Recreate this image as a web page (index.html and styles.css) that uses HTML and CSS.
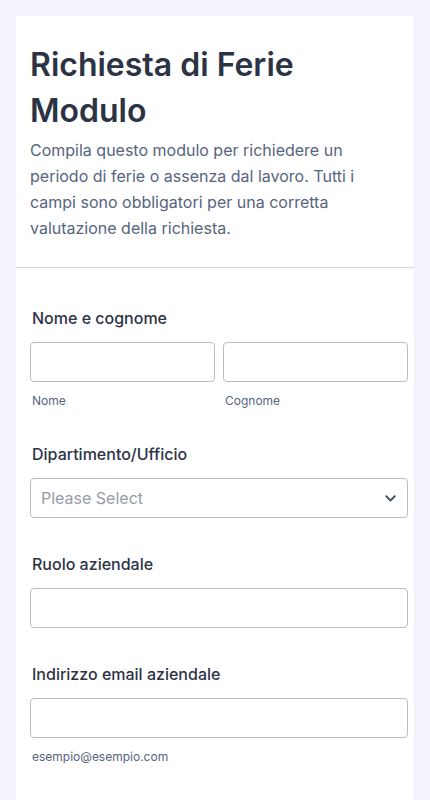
FILE: index.html
```html
<!DOCTYPE html>
<html lang="it">
<head>
  <meta charset="UTF-8">
  <meta name="viewport" content="width=device-width, initial-scale=1.0">
  <title>Richiesta di Ferie Modulo</title>
  <link rel="stylesheet" href="styles.css">
</head>
<body>

  <form class="modulo">
    <div class="intestazione">
      <h1>Richiesta di Ferie Modulo</h1>
      <p>Compila questo modulo per richiedere un periodo di ferie o assenza dal lavoro. Tutti i campi sono obbligatori per una corretta valutazione della richiesta.</p>
    </div>

    <div class="campi">
      <div class="campo primo">
        <label class="etichetta">Nome e cognome</label>
        <div class="riga">
          <div class="colonna">
            <input type="text" class="input">
            <span class="sotto">Nome</span>
          </div>
          <div class="colonna">
            <input type="text" class="input">
            <span class="sotto">Cognome</span>
          </div>
        </div>
      </div>

      <div class="campo">
        <label class="etichetta">Dipartimento/Ufficio</label>
        <div class="select">
          <span>Please Select</span>
          <svg width="11" height="7" viewBox="0 0 11 7"><path d="M1.3 1.3 L5.5 5.5 L9.7 1.3" fill="none" stroke="#4b5563" stroke-width="2" stroke-linecap="round" stroke-linejoin="round"/></svg>
        </div>
      </div>

      <div class="campo">
        <label class="etichetta">Ruolo aziendale</label>
        <input type="text" class="input">
      </div>

      <div class="campo">
        <label class="etichetta">Indirizzo email aziendale</label>
        <input type="email" class="input">
        <span class="sotto">esempio@esempio.com</span>
      </div>
    </div>
  </form>

</body>
</html>
```

FILE: styles.css
```css
body {
  margin: 0;
  padding: 16px 16px 0;
  background: #f3f3fe;
  font-family: Inter, "Noto Sans", sans-serif;
  color: #2c3345;
}

.modulo {
  background: #fff;
  border-radius: 3px 3px 0 0;
  min-height: 800px;
}

.intestazione {
  padding: 26px 14px 26px 14px;
  border-bottom: 1px solid #d3d6dc;
}

.intestazione h1 {
  margin: 0;
  font-size: 32px;
  line-height: 46px;
  font-weight: 600;
  color: #2c3345;
}

.intestazione p {
  margin: 3px 0 0;
  font-size: 16px;
  line-height: 26px;
  color: #57647e;
}

.campi {
  padding: 40px 6px 0 14px;
}

.campo {
  display: flex;
  flex-direction: column;
  margin-bottom: 36px;
}

.campo.primo {
  margin-bottom: 35px;
}

.etichetta {
  font-size: 16px;
  line-height: 20px;
  font-weight: 500;
  padding-left: 2px;
  margin-bottom: 14px;
}

.riga {
  display: flex;
  gap: 8px;
}

.colonna {
  flex: 1;
  display: flex;
  flex-direction: column;
}

.input {
  box-sizing: border-box;
  width: 100%;
  height: 40px;
  margin: 0;
  border: 1px solid #b8bdc9;
  border-radius: 4px;
  background: #fff;
  font: inherit;
}

.sotto {
  margin-top: 11px;
  padding-left: 2px;
  font-size: 12px;
  line-height: 16px;
  color: #57647e;
}

.select {
  box-sizing: border-box;
  height: 40px;
  border: 1px solid #b8bdc9;
  border-radius: 4px;
  padding: 0 11px 0 10px;
  display: flex;
  align-items: center;
  justify-content: space-between;
  font-size: 16px;
  color: #979ca8;
}
```
